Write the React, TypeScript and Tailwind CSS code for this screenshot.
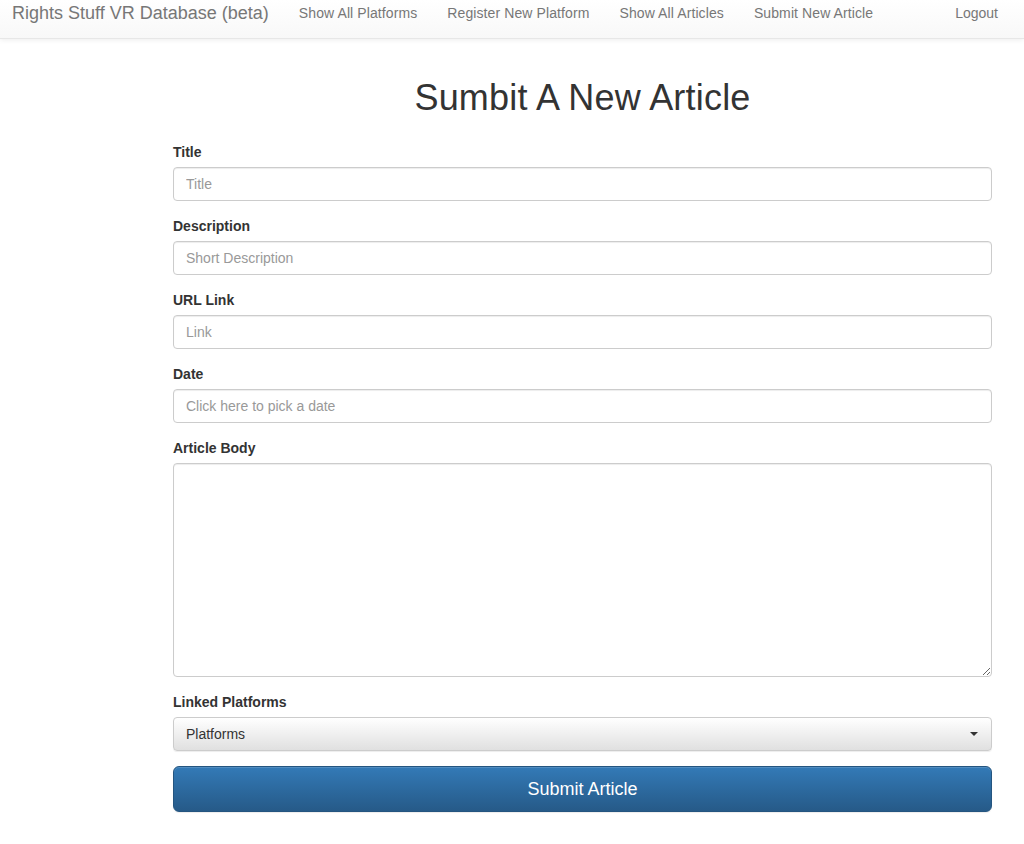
import React from "react";

const font = { fontFamily: '"Liberation Sans", Arial, sans-serif' };

const fields = [
  { label: "Title", placeholder: "Title" },
  { label: "Description", placeholder: "Short Description" },
  { label: "URL Link", placeholder: "Link" },
  { label: "Date", placeholder: "Click here to pick a date" },
];

const navLinks = [
  "Show All Platforms",
  "Register New Platform",
  "Show All Articles",
  "Submit New Article",
];

const App = () => {
  return (
    <div className="min-h-[844px] bg-white text-[#333] text-[14px]" style={font}>
      <nav className="h-[39px] flex items-start border-b border-[#e7e7e7] bg-gradient-to-b from-white to-[#f8f8f8] shadow-[0_1px_5px_rgba(0,0,0,0.075)]">
        <a className="pl-[12px] pr-[15px] pt-[3px] text-[18px] leading-[20px] text-[#777]">
          Rights Stuff VR Database (beta)
        </a>
        {navLinks.map((l) => (
          <a key={l} className="px-[15px] pt-[3px] leading-[20px] tracking-[0.1px] text-[#777]">
            {l}
          </a>
        ))}
        <a className="ml-auto pr-[26px] pt-[3px] leading-[20px] text-[#777]">Logout</a>
      </nav>

      <div className="w-[819px] ml-[173px]">
        <h1 className="mt-[39px] mb-[24px] text-center text-[36px] leading-[40px] font-normal tracking-[0.2px]">
          Sumbit A New Article
        </h1>

        {fields.map((f) => (
          <div key={f.label} className="mb-[15px]">
            <label className="block mb-[5px] font-bold leading-[20px]">{f.label}</label>
            <input
              className="block w-full h-[34px] px-[12px] border border-[#ccc] rounded-[4px] shadow-[inset_0_1px_1px_rgba(0,0,0,0.075)] placeholder:text-[#999] outline-none"
              placeholder={f.placeholder}
            />
          </div>
        ))}

        <div className="mb-[15px]">
          <label className="block mb-[5px] font-bold leading-[20px]">Article Body</label>
          <textarea className="block w-full h-[214px] px-[12px] py-[6px] border border-[#ccc] rounded-[4px] shadow-[inset_0_1px_1px_rgba(0,0,0,0.075)] outline-none" />
        </div>

        <div className="mb-[15px]">
          <label className="block mb-[5px] font-bold leading-[20px]">Linked Platforms</label>
          <button className="w-full h-[34px] flex items-center justify-between px-[12px] border border-[#ccc] rounded-[4px] bg-gradient-to-b from-white to-[#e0e0e0] shadow-[0_1px_1px_rgba(0,0,0,0.075)] text-[#333]">
            <span>Platforms</span>
            <svg width="8" height="4" viewBox="0 0 8 4" className="mr-[1px]">
              <path d="M0 0h8L4 4z" fill="#333" />
            </svg>
          </button>
        </div>

        <button className="w-full h-[46px] rounded-[6px] border border-[#245580] bg-gradient-to-b from-[#337ab7] to-[#265a88] text-white text-[18px] shadow-[inset_0_1px_0_rgba(255,255,255,0.15),0_1px_1px_rgba(0,0,0,0.075)]">
          Submit Article
        </button>
      </div>
    </div>
  );
};

export default App;
